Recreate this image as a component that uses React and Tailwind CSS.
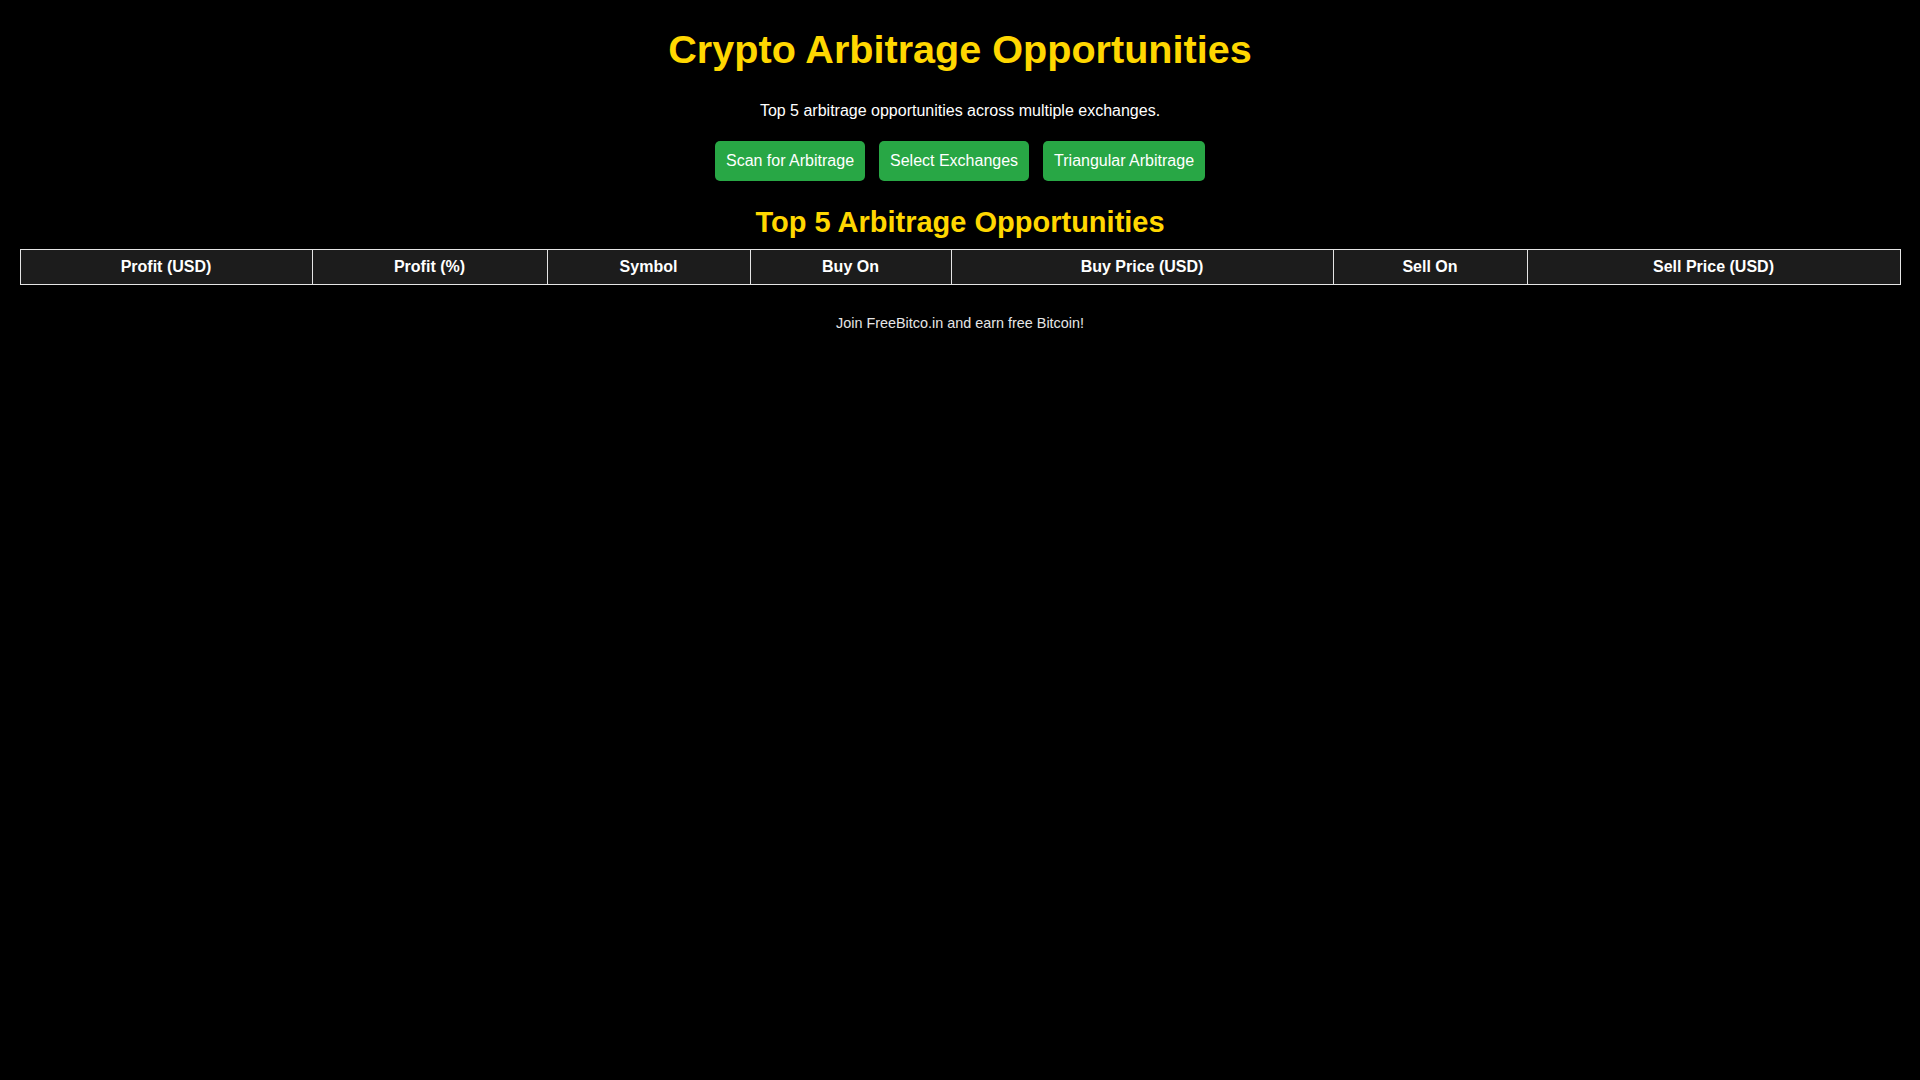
import React from "react";

const columns = [
  { label: "Profit (USD)", width: "w-[292px]" },
  { label: "Profit (%)", width: "w-[235px]" },
  { label: "Symbol", width: "w-[203px]" },
  { label: "Buy On", width: "w-[201px]" },
  { label: "Buy Price (USD)", width: "w-[382px]" },
  { label: "Sell On", width: "w-[194px]" },
  { label: "Sell Price (USD)", width: "w-[373px]" },
];

const buttons = ["Scan for Arbitrage", "Select Exchanges", "Triangular Arbitrage"];

export default function App() {
  return (
    <div className="min-h-screen bg-black text-white font-['Liberation_Sans',Arial,sans-serif] px-[20px] pt-[26px] flex flex-col items-center">
      <h1 className="text-[39.6px] leading-[46px] font-bold text-[#ffd700]">
        Crypto Arbitrage Opportunities
      </h1>

      <p className="mt-[30px] text-[16px] leading-[18px] text-white">
        Top 5 arbitrage opportunities across multiple exchanges.
      </p>

      <div className="mt-[21px] flex gap-[14px]">
        {buttons.map((b) => (
          <button
            key={b}
            className="h-[40px] px-[11px] bg-[#28a745] text-white text-[16px] rounded-[5px]"
          >
            {b}
          </button>
        ))}
      </div>

      <h2 className="mt-[25px] text-[29px] leading-[33px] font-bold text-[#ffd700]">
        Top 5 Arbitrage Opportunities
      </h2>

      <table className="mt-[10px] w-[1880px] table-fixed border-collapse">
        <colgroup>
          {columns.map((c) => (
            <col key={c.label} className={c.width} />
          ))}
        </colgroup>
        <thead>
          <tr>
            {columns.map((c) => (
              <th
                key={c.label}
                className="border border-[#e5e5e5] bg-[#1c1c1c] h-[35px] py-0 text-center text-[16px] font-bold text-white"
              >
                {c.label}
              </th>
            ))}
          </tr>
        </thead>
        <tbody></tbody>
      </table>

      <p className="mt-[30px] text-[14.4px] leading-[17px] text-[#e6e6e6]">
        Join FreeBitco.in and earn free Bitcoin!
      </p>
    </div>
  );
}
